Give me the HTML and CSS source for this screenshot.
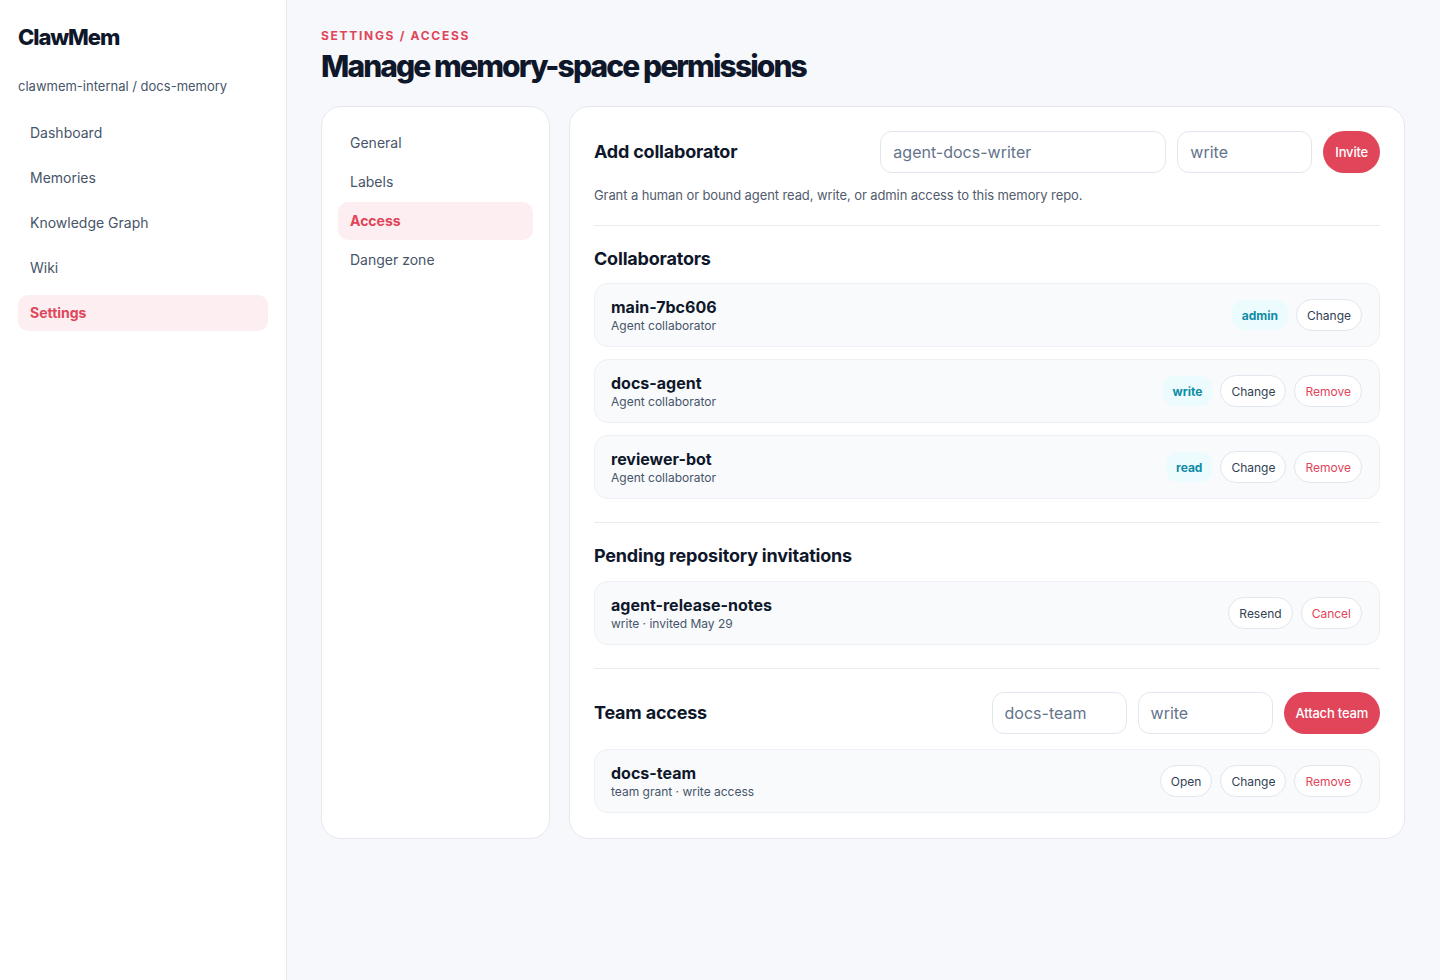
FILE: index.html
```html
<!DOCTYPE html>
<html lang="en">
<head>
<meta charset="utf-8">
<title>ClawMem – Access</title>
<link rel="stylesheet" href="styles.css">
</head>
<body>
<div class="app">
  <aside class="sidebar">
    <div class="logo">ClawMem</div>
    <div class="repo">clawmem-internal / docs-memory</div>
    <nav class="side-nav">
      <a class="side-item">Dashboard</a>
      <a class="side-item">Memories</a>
      <a class="side-item">Knowledge Graph</a>
      <a class="side-item">Wiki</a>
      <a class="side-item active">Settings</a>
    </nav>
  </aside>
  <main class="main">
    <div class="eyebrow">SETTINGS / ACCESS</div>
    <h1 class="title">Manage memory-space permissions</h1>
    <div class="columns">
      <nav class="sub-nav">
        <a class="sub-item">General</a>
        <a class="sub-item">Labels</a>
        <a class="sub-item active">Access</a>
        <a class="sub-item">Danger zone</a>
      </nav>
      <section class="panel">
        <div class="form-row">
          <h2 class="section-title">Add collaborator</h2>
          <div class="form-controls">
            <div class="input wide">agent-docs-writer</div>
            <div class="input narrow">write</div>
            <button class="btn-primary">Invite</button>
          </div>
        </div>
        <p class="hint">Grant a human or bound agent read, write, or admin access to this memory repo.</p>
        <hr class="divider">
        <h2 class="section-title list-title">Collaborators</h2>
        <div class="list">
          <div class="row">
            <div class="who"><div class="name">main-7bc606</div><div class="meta">Agent collaborator</div></div>
            <div class="actions"><span class="badge">admin</span><button class="btn">Change</button></div>
          </div>
          <div class="row">
            <div class="who"><div class="name">docs-agent</div><div class="meta">Agent collaborator</div></div>
            <div class="actions"><span class="badge">write</span><button class="btn">Change</button><button class="btn danger">Remove</button></div>
          </div>
          <div class="row">
            <div class="who"><div class="name">reviewer-bot</div><div class="meta">Agent collaborator</div></div>
            <div class="actions"><span class="badge">read</span><button class="btn">Change</button><button class="btn danger">Remove</button></div>
          </div>
        </div>
        <hr class="divider after-list">
        <h2 class="section-title list-title pending-title">Pending repository invitations</h2>
        <div class="list">
          <div class="row">
            <div class="who"><div class="name">agent-release-notes</div><div class="meta">write · invited May 29</div></div>
            <div class="actions"><button class="btn">Resend</button><button class="btn danger">Cancel</button></div>
          </div>
        </div>
        <hr class="divider after-list">
        <div class="form-row team-row">
          <h2 class="section-title">Team access</h2>
          <div class="form-controls">
            <div class="input narrow">docs-team</div>
            <div class="input narrow">write</div>
            <button class="btn-primary">Attach team</button>
          </div>
        </div>
        <div class="list">
          <div class="row">
            <div class="who"><div class="name">docs-team</div><div class="meta">team grant · write access</div></div>
            <div class="actions"><button class="btn">Open</button><button class="btn">Change</button><button class="btn danger">Remove</button></div>
          </div>
        </div>
      </section>
    </div>
  </main>
</div>
</body>
</html>
```

FILE: styles.css
```css
* { box-sizing: border-box; }
html, body { margin: 0; padding: 0; }
body {
  font-family: Inter, "Noto Sans", "Liberation Sans", sans-serif;
  background: #f7f8fb;
  color: #0f172a;
  height: 980px;
  overflow: hidden;
}
.app { display: flex; height: 980px; }

.sidebar {
  width: 287px;
  flex: none;
  background: #ffffff;
  border-right: 1px solid #e6e8ef;
  padding: 23px 18px 0 18px;
}
.logo {
  font-size: 22px;
  font-weight: 800;
  letter-spacing: -1.1px;
  color: #0f172a;
  line-height: 28px;
}
.repo {
  margin-top: 26px;
  font-size: 13px;
  color: #475569;
  line-height: 18px;
}
.side-nav { margin-top: 20px; display: flex; flex-direction: column; gap: 9px; }
.side-item {
  display: block;
  height: 36px;
  line-height: 36px;
  padding: 0 12px;
  border-radius: 10px;
  font-size: 14px;
  color: #475569;
  width: 250px;
}
.side-item.active { background: #fdeff1; color: #e0455a; font-weight: 700; }

.main { flex: 1; padding: 28px 34px 0 34px; }
.eyebrow {
  font-size: 12px;
  font-weight: 700;
  letter-spacing: 1.7px;
  color: #e0455a;
  line-height: 16px;
}
.title {
  margin: 4px 0 0 0;
  font-size: 30px;
  font-weight: 800;
  letter-spacing: -1.9px;
  line-height: 36px;
  color: #0f172a;
}
.columns { display: flex; gap: 19px; margin-top: 22px; align-items: stretch; }

.sub-nav {
  width: 229px;
  flex: none;
  background: #ffffff;
  border: 1px solid #e6e8ef;
  border-radius: 20px;
  padding: 17px 16px;
  display: flex;
  flex-direction: column;
  gap: 1px;
}
.sub-item {
  display: block;
  height: 38px;
  line-height: 38px;
  padding: 0 12px;
  border-radius: 10px;
  font-size: 14px;
  color: #475569;
}
.sub-item.active { background: #fdeff1; color: #e0455a; font-weight: 700; }

.panel {
  width: 836px;
  background: #ffffff;
  border: 1px solid #e6e8ef;
  border-radius: 20px;
  padding: 24px 24px 25px 24px;
}
.form-row { display: flex; align-items: center; justify-content: space-between; }
.section-title {
  margin: 0;
  font-size: 18px;
  font-weight: 700;
  color: #0f172a;
  letter-spacing: -0.2px;
  line-height: 24px;
}
.form-controls { display: flex; gap: 11px; align-items: center; }
.input {
  height: 42px;
  border: 1px solid #e2e6ee;
  border-radius: 12px;
  background: #fff;
  padding: 0 12px;
  font-size: 16px;
  color: #64748b;
  line-height: 40px;
}
.input.wide { width: 286px; }
.input.narrow { width: 135px; }
.btn-primary {
  height: 42px;
  border: none;
  border-radius: 21px;
  background: #e0455a;
  color: #fff;
  font-family: inherit;
  font-size: 13px;
  font-weight: 500;
  letter-spacing: -0.2px;
  padding: 0 12px;
}
.hint {
  margin: 13px 0 0 0;
  font-size: 13px;
  color: #525c6e;
  line-height: 18px;
  letter-spacing: -0.1px;
}
.divider { border: none; border-top: 1px solid #e8ebf0; margin: 21px 0 0 0; }
.divider.after-list { margin-top: 23px; }
.list-title { margin-top: 21px; margin-bottom: 12px; }
.pending-title { margin-bottom: 13px; }
.list { display: flex; flex-direction: column; gap: 12px; }
.row {
  height: 64px;
  border: 1px solid #edf0f4;
  background: #f8fafc;
  border-radius: 14px;
  padding: 0 17px 0 16px;
  display: flex;
  align-items: center;
  justify-content: space-between;
}
.name { font-size: 16px; font-weight: 700; color: #0f172a; line-height: 20px; }
.meta { font-size: 12px; color: #475569; line-height: 16px; margin-top: 1px; }
.actions { display: flex; gap: 8px; align-items: center; }
.badge {
  background: #ecfbfd;
  color: #0e8ca6;
  font-size: 12px;
  font-weight: 700;
  padding: 8px 10px 6px;
  border-radius: 12px;
  line-height: 16px;
}
.btn {
  height: 32px;
  border: 1px solid #e2e6ee;
  background: #fff;
  border-radius: 16px;
  padding: 0 10px;
  font-family: inherit;
  font-size: 12px;
  color: #334155;
}
.btn.danger { color: #e0455a; }
.team-row { margin-top: 23px; margin-bottom: 15px; }
```
